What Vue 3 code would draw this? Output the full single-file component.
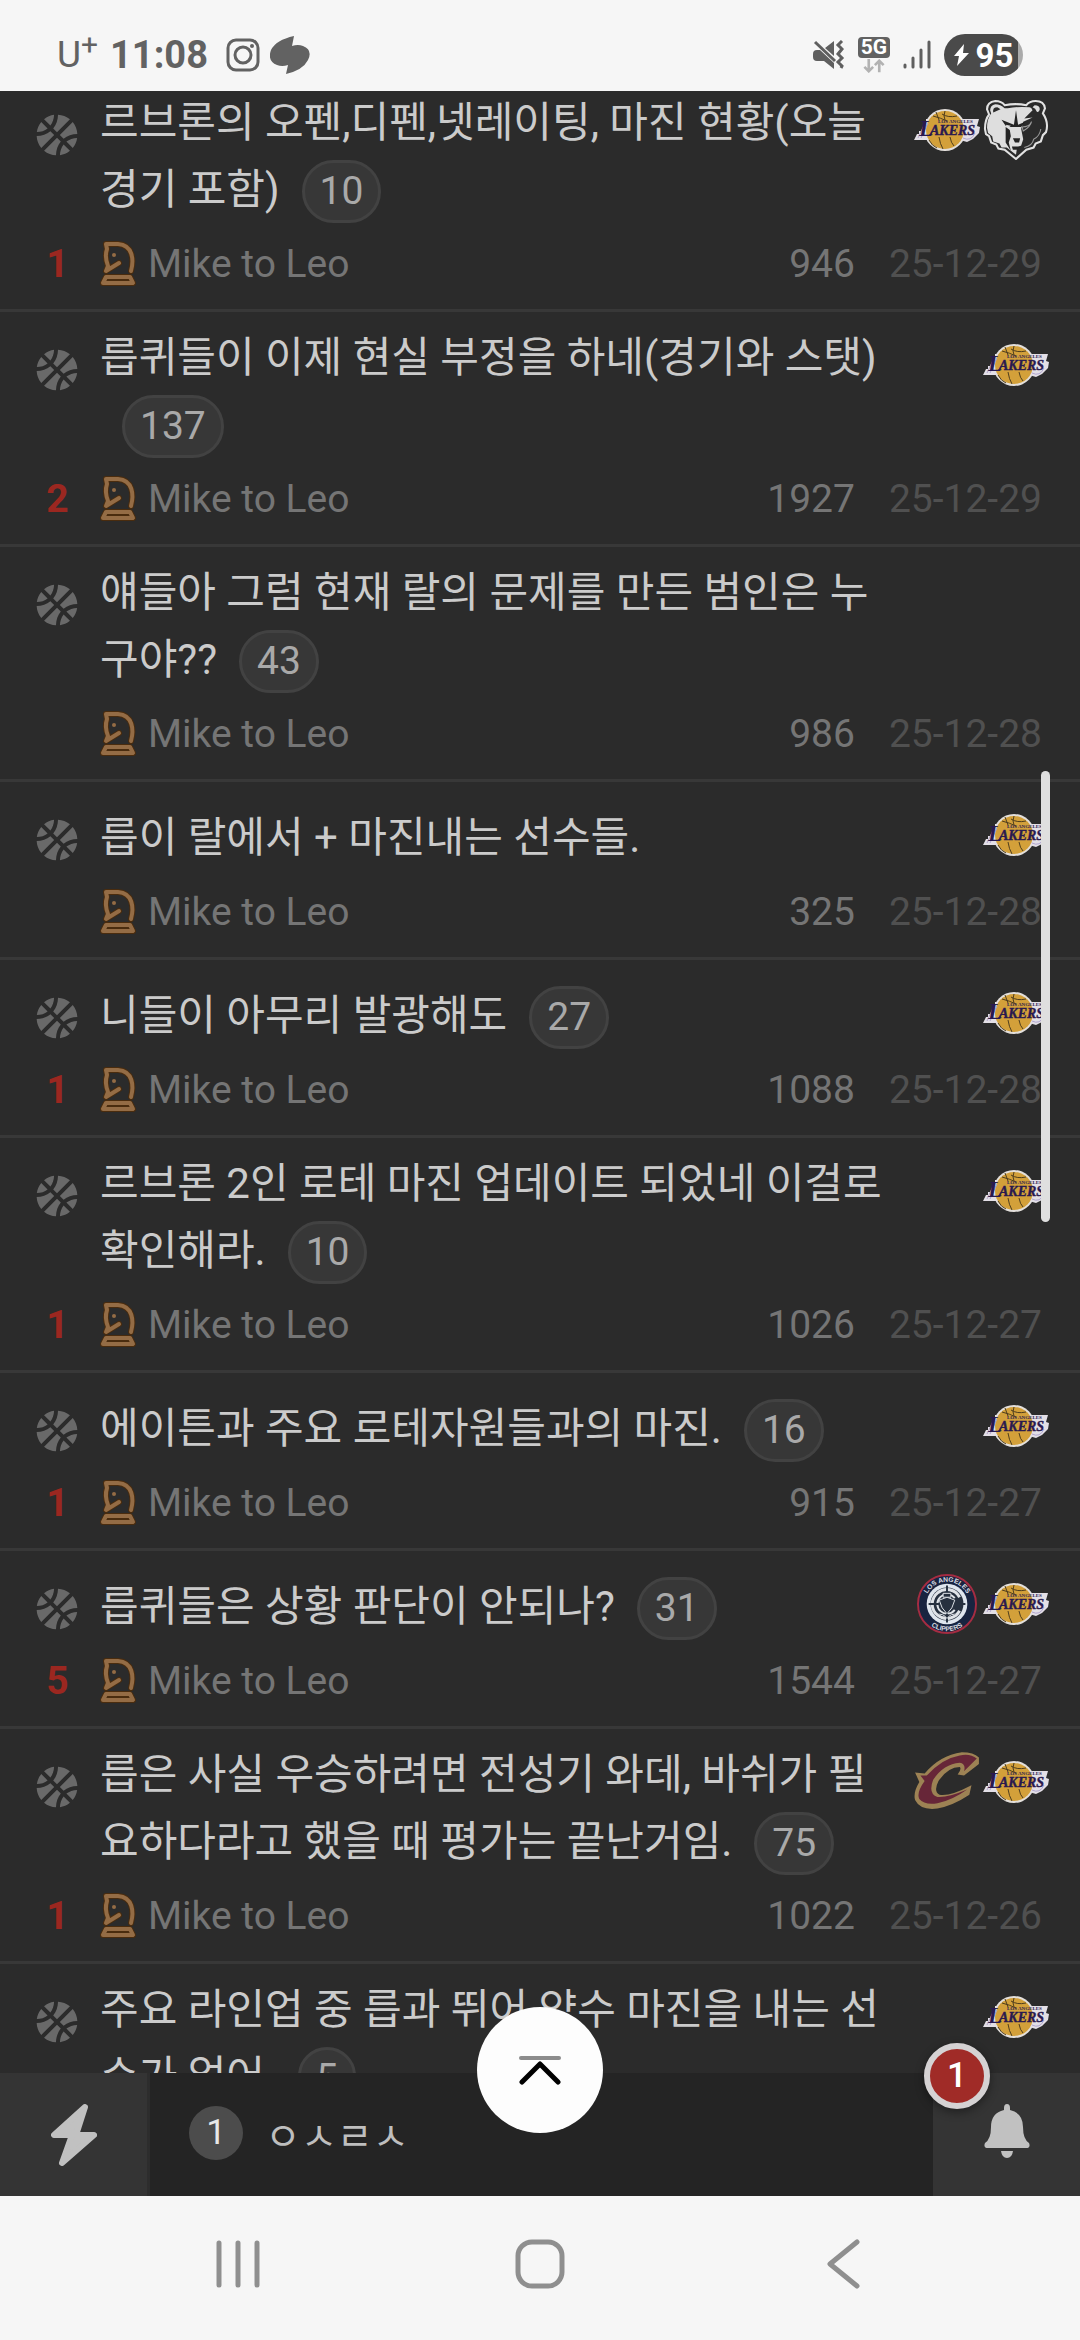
<script setup>
const posts = [
  { id: 1, title: '르브론의 오펜,디펜,넷레이팅, 마진 현황(오늘 경기 포함)', comments: 10, votes: 1, views: 946, date: '25-12-29', teams: ['lakers', 'grizzlies'] },
  { id: 2, title: '릅퀴들이 이제 현실 부정을 하네(경기와 스탯)', comments: 137, votes: 2, views: 1927, date: '25-12-29', teams: ['lakers'] },
  { id: 3, title: '얘들아 그럼 현재 랄의 문제를 만든 범인은 누구야??', comments: 43, votes: 0, views: 986, date: '25-12-28', teams: [] },
  { id: 4, title: '릅이 랄에서 + 마진내는 선수들.', comments: 0, votes: 0, views: 325, date: '25-12-28', teams: ['lakers'] },
  { id: 5, title: '니들이 아무리 발광해도', comments: 27, votes: 1, views: 1088, date: '25-12-28', teams: ['lakers'] },
  { id: 6, title: '르브론 2인 로테 마진 업데이트 되었네 이걸로 확인해라.', comments: 10, votes: 1, views: 1026, date: '25-12-27', teams: ['lakers'] },
  { id: 7, title: '에이튼과 주요 로테자원들과의 마진.', comments: 16, votes: 1, views: 915, date: '25-12-27', teams: ['lakers'] },
  { id: 8, title: '릅퀴들은 상황 판단이 안되나?', comments: 31, votes: 5, views: 1544, date: '25-12-27', teams: ['clippers', 'lakers'] },
  { id: 9, title: '릅은 사실 우승하려면 전성기 와데, 바쉬가 필요하다라고 했을 때 평가는 끝난거임.', comments: 75, votes: 1, views: 1022, date: '25-12-26', teams: ['cavaliers', 'lakers'] },
  { id: 10, title: '주요 라인업 중 릅과 뛰어 양수 마진을 내는 선수가 없어.', comments: 5, votes: 0, views: 870, date: '25-12-26', teams: ['lakers'] },
]
const author = 'Mike to Leo'
</script>

<template>
  <div class="screen">
    <header class="status">
      <div class="status-group">
        <span class="carrier">U<sup>+</sup></span>
        <time class="clock">11:08</time>
        <svg class="app-icon" viewBox="0 0 34 34" fill="none" stroke="#626262" stroke-width="3">
          <rect x="2" y="2" width="30" height="30" rx="8" />
          <circle cx="17" cy="17" r="8" />
          <circle cx="26" cy="8" r="2" fill="#626262" stroke="none" />
        </svg>
        <svg class="blob-icon" viewBox="0 0 40 38" fill="#626262">
          <path d="M24 0Q6 4 1 14-3 25 7 29q5 2 11 0l-2 9q17-4 22-14 5-10-5-14-5-2-11 0z" />
        </svg>
      </div>
      <div class="status-group right">
        <svg class="mute" viewBox="0 0 32 30" fill="#5f5f5f">
          <path d="M0 14q0-4 4-4h3l14 13v6l-10-8H4q-4 0-4-4zM12 8l9-7v15z" />
          <path d="M2 2l20 19" stroke="#5f5f5f" stroke-width="3" />
          <path d="M29 1l-4 4 4 4-4 5 4 4-4 4 4 4-1 2" fill="none" stroke="#5f5f5f" stroke-width="3" />
        </svg>
        <div class="network">
          <span class="gen">5G</span>
          <svg class="arrows" viewBox="0 0 24 16" fill="none" stroke="#b2b2b2" stroke-width="3">
            <path d="M6 0v14M1 9l5 5 5-5M18 15V2M13 7l5-5 5 5" />
          </svg>
        </div>
        <svg class="signal" viewBox="0 0 28 30" stroke="#5f5f5f" stroke-width="3" stroke-linecap="round">
          <path d="M2 25v2M10 18v9M18 10v17M26 2v25" />
        </svg>
        <div class="battery">
          <svg viewBox="0 0 15 22" fill="#fff"><path d="M10 0L0 12h5L3 22l12-13H9z" /></svg>
          <span>95</span>
        </div>
      </div>
    </header>

    <main class="feed">
      <ul class="posts">
        <li v-for="post in posts" :key="post.id" class="post">
          <svg class="ball" viewBox="0 0 496 512">
            <path d="M212.3 10.3c-43.8 6.3-86.2 24.1-122.2 53.8l77.4 77.4c27.8-35.8 43.3-81.2 44.8-131.2zM248 222L405.9 64.1c-42.4-35-93.6-53.5-145.5-56.1-1.2 63.9-21.5 122.3-58.7 167.7L248 222zM56.1 98.1c-29.7 36-47.5 78.4-53.8 122.2 50-1.5 95.5-17 131.2-44.8L56.1 98.1zm272.2 204.2c45.3-37.1 103.7-57.4 167.7-58.7-2.6-51.9-21.1-103.1-56.1-145.5L282 256l46.3 46.3zM248 290L90.1 447.9c42.4 34.9 93.6 53.5 145.5 56.1 1.3-64 21.6-122.4 58.7-167.7L248 290zm191.9 123.9c29.7-36 47.5-78.4 53.8-122.2-50.1 1.6-95.5 17.1-131.2 44.8l77.4 77.4zM167.7 209.7C122.3 246.9 63.9 267.3 0 268.4c2.6 51.9 21.1 103.1 56.1 145.5L214 256l-46.3-46.3zm116 292c43.8-6.3 86.2-24.1 122.2-53.8l-77.4-77.4c-27.7 35.7-43.2 81.2-44.8 131.2z" />
          </svg>
          <p class="title">
            <span class="title-text"><a href="#">{{ post.title }}</a><span v-if="post.comments" class="count">{{ post.comments }}</span></span>
          </p>
          <div class="teams">
            <template v-for="team in post.teams" :key="team">
              <svg v-if="team === 'lakers'" class="team" viewBox="0 0 66 42" role="img" aria-label="Lakers">
                <circle cx="31" cy="21" r="21" fill="#e3dfdb" />
                <path d="M12 10h53l-2 7 3 1-1 6-6 6-6 3-7-2H0l3-6h2v-3h3v-3h2v-4h2z" fill="#e3dfe6" />
                <circle cx="31" cy="21" r="19" fill="#d3a03a" />
                <path d="M31 2q-2 5 0 9M19 7q8 2 14 5M43 7q-9 2-15-2M22 3l3 8M25 28q1 7 4 12M36 28q1 6 4 9M15 31q3 6 8 8" fill="none" stroke="#4e3d1d" stroke-width="1" />
                <path d="M4 29l7-15M7 29l7-15M49 29q8 4 12-5" fill="none" stroke="#b0a5cf" stroke-width="1" />
                <g font-family="'Liberation Serif', serif" font-weight="bold" fill="#29194f">
                  <text x="24" y="14" font-size="5">LOS ANGELES</text>
                  <text x="5" y="27" font-size="23" font-style="italic">L<tspan x="16" y="26" font-size="14" stroke="#29194f" stroke-width="0.4">AKERS</tspan></text>
                </g>
              </svg>

              <svg v-else-if="team === 'grizzlies'" class="team" viewBox="0 0 62 58" role="img" aria-label="Grizzlies">
                <path d="M20 5Q17 1 11 1 3 2 3 9l2 5Q1 19 1 28l1 5 3 2 2 6 5 2 2 4 6 1 11 9 10-9 7-2 2-4 5-2 2-6 3-3q3-9-3-18l2-5Q58 1 50 1q-6 0-9 4-10-2-21 0z" fill="#2b2b2b" stroke="#e2e2e2" stroke-width="2" />
                <path d="M20 8Q16 4 11 4 6 5 6 10l1 3Q3 18 3 27l1 5 4 3 1 5 6 2 2 4 5 0 9 7 1-7 4-2 2-6-2-10 2-7 9-4-8 1 8-8q-1-3-3-3-11-1-21 1z" fill="#dedede" />
                <path d="M9 12q-1-5 4-5l3 2z" fill="#2b2b2b" />
                <path d="M17 19l12 5 2-14 2 14 7-3-4 5-7 0-3 0-5-1zM21 26l4 3 1 6-2 6 2 8-5-8zM28 37h7l-1 4-4 0zM27 45h9l-3 3h-5z" fill="#242424" />
                <path d="M21 24l5 1-3 2zM49 5q5 0 5 4-1 4-3 2-1-3-4-4z" fill="#dedede" />
                <path d="M37 26q7 0 9-5-1 5-8 9zM39 46q8-2 9-8 6-3 7-10" fill="none" stroke="#9c9c9c" stroke-width="1" />
              </svg>

              <svg v-else-if="team === 'clippers'" class="team" viewBox="0 0 62 62" role="img" aria-label="Clippers">
                <circle cx="31" cy="31" r="30" fill="#182440" stroke="#a52c42" stroke-width="2" />
                <circle cx="31" cy="31" r="21" fill="#dfe6ee" />
                <circle cx="31" cy="31" r="17" fill="#26303f" />
                <path d="M44 24A15 15 0 1 0 44 38" fill="none" stroke="#dfe3e8" stroke-width="3" />
                <path d="M39 25A10 10 0 1 0 39 37" fill="none" stroke="#dfe3e8" stroke-width="2" />
                <path d="M31 12v38M12 31h38" stroke="#26303f" stroke-width="2" />
                <path d="M23 27l8-3 8 3-3 8-5 6-5-6z" fill="#26303f" stroke="#dfe3e8" stroke-width="1" />
                <path d="M27 20h8v4h-8zM20 42q7-2 11 4 4-6 11-4" fill="#26303f" stroke="#dfe3e8" stroke-width="1" />
                <path id="arc-top" d="M8 31a23 23 0 0 1 46 0" fill="none" />
                <path id="arc-bottom" d="M3 31a28 28 0 0 0 56 0" fill="none" />
                <g font-family="'Liberation Sans', sans-serif" font-weight="bold" font-size="7" fill="#d8dce2" text-anchor="middle">
                  <text><textPath href="#arc-top" startOffset="50%">LOS ANGELES</textPath></text>
                  <text><textPath href="#arc-bottom" startOffset="50%">CLIPPERS</textPath></text>
                </g>
              </svg>

              <svg v-else class="team" viewBox="0 0 62 56" role="img" aria-label="Cavaliers">
                <path d="M61 5v6L47 22l-6-1q4-5 2-7-11 0-20 13-5 10 1 13 9 2 30-9l-2 9Q37 50 22 53 6 55 1 45-1 38 5 28L1 19l9 1Q24 3 45 0q11 0 16 5z" fill="#9d8254" />
                <path d="M59 6Q53 1 43 3 26 6 12 22H6l4 5Q2 38 5 44q5 6 17 4 14-3 28-13-19 8-28 7-9-3-4-16Q28 11 43 10q6 1 4 8z" fill="#672638" />
              </svg>
            </template>
          </div>
          <span class="votes">{{ post.votes || '' }}</span>
          <div class="meta">
            <svg class="knight" viewBox="0 0 36 46">
              <g fill="none" stroke-linecap="round" stroke-linejoin="round">
                <g stroke="#4a2c0e" stroke-width="6">
                  <path d="M31 30C34 19 33 4 18 3H6l1 5C5 14 6 20 8 25l-2 5 13-8" />
                  <path d="M6 36h24l3 6H3z" />
                </g>
                <g stroke="#946c45" stroke-width="4">
                  <path d="M31 30C34 19 33 4 18 3H6l1 5C5 14 6 20 8 25l-2 5 13-8" />
                  <path d="M6 36h24l3 6H3z" />
                </g>
              </g>
              <circle cx="14" cy="14" r="2" fill="#946c45" />
            </svg>
            <span class="author">{{ author }}</span>
            <span class="views">{{ post.views }}</span>
            <time class="date">{{ post.date }}</time>
          </div>
        </li>
      </ul>
      <div class="scroll-thumb"></div>
    </main>

    <footer class="dock">
      <button class="dock-btn quick" aria-label="바로가기">
        <svg viewBox="0 0 46 62" fill="#c1c1c1" stroke="#c1c1c1" stroke-width="6" stroke-linejoin="round">
          <path d="M34 3L3 31h18L11 59l32-28H25z" />
        </svg>
      </button>
      <a class="trend" href="#">
        <span class="rank">1</span>
        <span>ㅇㅅㄹㅅ</span>
      </a>
      <button class="dock-btn alerts" aria-label="알림">
        <svg viewBox="0 0 46 54" fill="#c1c1c1">
          <path d="M20 4q0-4 3-4t3 4v2q13 3 13 17 0 12 6 16 2 5-3 5H4q-5 0-3-5 6-4 6-16Q7 9 20 6zM17 47h12q-1 7-6 7t-6-7z" />
        </svg>
        <span class="alert-count">1</span>
      </button>
      <button class="to-top" aria-label="맨 위로">
        <svg viewBox="0 0 44 30" fill="none" stroke-linecap="round" stroke-width="4">
          <path d="M3 3h38" stroke="#8c8c8c" />
          <path d="M4 27L22 9l18 18" stroke="#000" stroke-width="5" stroke-linejoin="round" />
        </svg>
      </button>
    </footer>

    <nav class="system-nav">
      <button aria-label="최근 앱"><svg viewBox="0 0 50 50"><path d="M6 4v42M25 4v42M44 4v42" /></svg></button>
      <button aria-label="홈"><svg viewBox="0 0 50 50"><rect x="3" y="3" width="44" height="44" rx="14" /></svg></button>
      <button aria-label="뒤로"><svg viewBox="0 0 50 50"><path d="M40 3L13 25l27 22" /></svg></button>
    </nav>
  </div>
</template>

<style>
body {
  margin: 0;
}
</style>

<style scoped>
.screen {
  display: flex;
  flex-direction: column;
  height: 100vh;
  overflow: hidden;
  background: #2b2b2b;
  color: #cbcbcb;
  font-family: Roboto, "Noto Sans CJK KR", sans-serif;
  font-size: 39px;
}
svg {
  display: block;
  flex: none;
}
button {
  border: 0;
  padding: 0;
  background: none;
  font: inherit;
}
a {
  color: inherit;
  text-decoration: none;
}

.status {
  flex: none;
  display: flex;
  justify-content: space-between;
  align-items: center;
  height: 72px;
  padding: 19px 57px 0;
  background: #f6f6f6;
  color: #626262;
}
.status-group {
  display: flex;
  align-items: center;
}
.carrier {
  display: flex;
  font-size: 37px;
  line-height: 40px;
}
.carrier sup {
  font-size: 30px;
  line-height: 20px;
}
.clock {
  margin: 0 18px 0 12px;
  font-size: 38px;
  font-weight: 700;
}
.app-icon {
  width: 34px;
  height: 34px;
  margin-right: 10px;
}
.blob-icon {
  width: 40px;
  height: 38px;
}
.right {
  gap: 13px;
}
.mute {
  width: 32px;
  height: 30px;
}
.network {
  display: flex;
  flex-direction: column;
  align-items: center;
  gap: 1px;
}
.gen {
  width: 32px;
  border-radius: 4px;
  background: #626262;
  color: #fff;
  font-size: 21px;
  font-weight: 700;
  line-height: 21px;
  text-align: center;
}
.arrows {
  width: 24px;
  height: 14px;
}
.signal {
  width: 28px;
  height: 30px;
}
.battery {
  display: flex;
  align-items: center;
  justify-content: center;
  gap: 7px;
  width: 79px;
  height: 42px;
  border-radius: 21px;
  background: linear-gradient(90deg, #4a4a4a 94%, #aaa 94%);
  color: #fff;
  font-size: 33px;
  font-weight: 700;
}
.battery svg {
  width: 15px;
  height: 22px;
}

.feed {
  position: relative;
  flex: 1;
  min-height: 0;
  overflow: hidden;
}
.posts {
  list-style: none;
  margin: -14px 0 0;
  padding: 0;
}
.post {
  display: grid;
  grid-template-columns: 100px 1fr 180px;
  padding: 12px 0 16px;
  border-bottom: 3px solid #383838;
}
.ball {
  width: 42px;
  height: 42px;
  margin: 25px 0 0 36px;
  fill: #696969;
}
.title {
  display: flex;
  align-items: flex-end;
  min-height: 77px;
  margin: 0;
  font-size: 42px;
  line-height: 67px;
}
.count {
  display: inline-block;
  margin-left: 22px;
  padding: 0 15px;
  border: 3px solid #424242;
  border-radius: 32px;
  background: #373737;
  color: #a9a9a9;
  font-size: 39px;
  line-height: 57px;
}
.teams {
  display: flex;
  align-items: center;
  justify-content: flex-end;
  gap: 3px;
  height: 62px;
  margin-top: 10px;
  padding-right: 31px;
}
.team {
  width: 66px;
  height: 60px;
}
.votes,
.meta {
  margin-top: 12px;
  line-height: 58px;
}
.votes {
  padding-left: 15px;
  color: #9b2720;
  font-weight: 700;
  text-align: center;
}
.meta {
  grid-column: 2 / 4;
  display: flex;
  align-items: center;
  padding-right: 38px;
  color: #757575;
}
.knight {
  width: 36px;
  height: 46px;
  margin-right: 12px;
}
.views {
  margin-left: auto;
}
.date {
  margin-left: 34px;
  color: #505050;
}
.scroll-thumb {
  position: absolute;
  top: 680px;
  right: 30px;
  width: 9px;
  height: 451px;
  border-radius: 5px;
  background: #dfdfdf;
}

.dock {
  position: relative;
  flex: none;
  display: flex;
  height: 123px;
  background: #242424;
}
.dock-btn {
  position: relative;
  display: flex;
  align-items: center;
  justify-content: center;
  width: 147px;
  background: #343434;
}
.quick {
  box-sizing: border-box;
  width: 150px;
  border-right: 3px solid #2d2d2d;
}
.quick svg {
  width: 46px;
  height: 62px;
}
.alerts svg {
  width: 46px;
  height: 54px;
  margin-bottom: 8px;
}
.trend {
  flex: 1;
  display: flex;
  align-items: center;
  gap: 22px;
  padding: 0 0 3px 39px;
  color: #bebebe;
}
.rank,
.alert-count {
  width: 54px;
  height: 54px;
  border-radius: 50%;
  background: #4c4c4c;
  color: #e8e8e8;
  font-size: 35px;
  line-height: 54px;
  text-align: center;
}
.alert-count {
  position: absolute;
  top: -30px;
  left: -9px;
  border: 6px solid #d5d2d3;
  background: #a02b27;
  color: #fff;
  font-weight: 500;
  box-shadow: 0 3px 10px rgba(0, 0, 0, 0.4);
}
.to-top {
  position: absolute;
  top: -66px;
  left: calc(50% - 63px);
  display: flex;
  align-items: center;
  justify-content: center;
  width: 126px;
  height: 126px;
  border-radius: 50%;
  background: #fdfdfd;
}
.to-top svg {
  width: 44px;
  height: 30px;
}

.system-nav {
  flex: none;
  display: flex;
  justify-content: center;
  align-items: center;
  gap: 252px;
  height: 144px;
  padding-bottom: 8px;
  box-sizing: border-box;
  background: #f6f6f6;
}
.system-nav svg {
  width: 50px;
  height: 50px;
  fill: none;
  stroke: #8f8f8f;
  stroke-width: 5px;
  stroke-linecap: round;
  stroke-linejoin: round;
}
</style>
